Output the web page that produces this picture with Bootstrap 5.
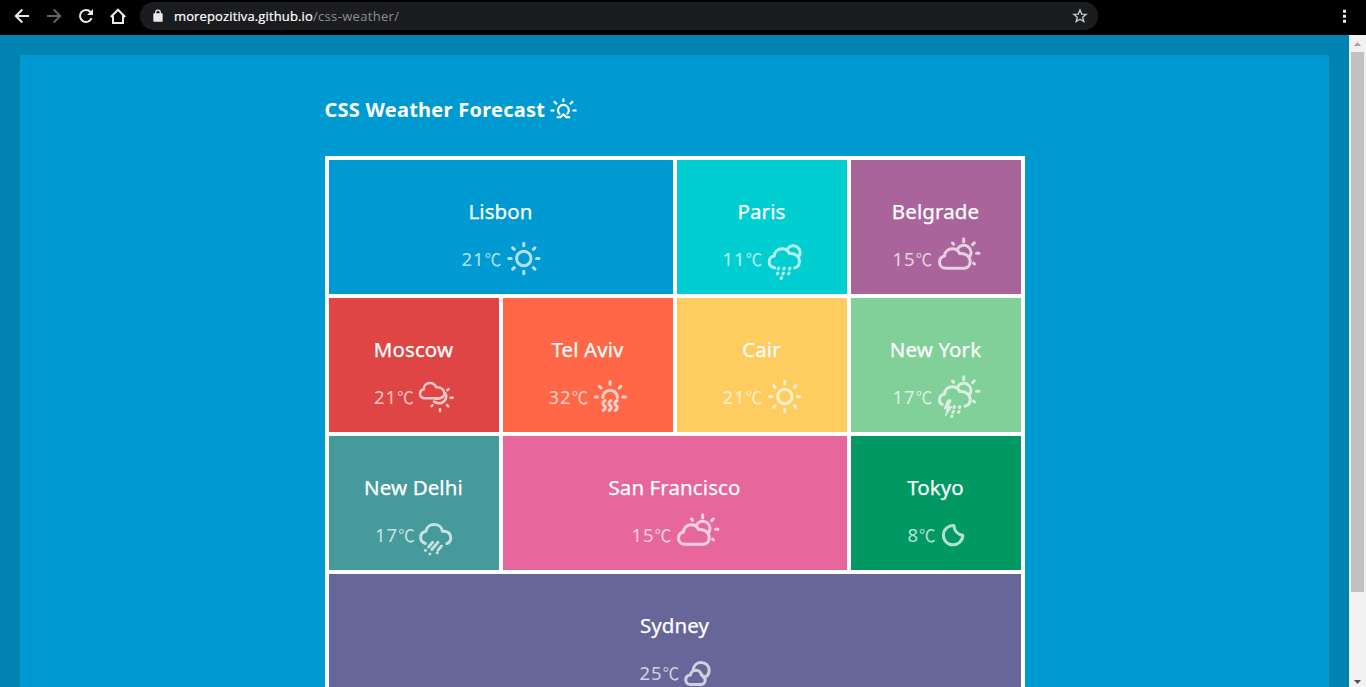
<!DOCTYPE html>
<html lang="en">
<head>
<meta charset="utf-8">
<meta name="viewport" content="width=device-width, initial-scale=1">
<title>CSS Weather Forecast</title>
<link href="https://cdn.jsdelivr.net/npm/bootstrap@5.3.0/dist/css/bootstrap.min.css" rel="stylesheet">
<style>
body{height:687px;overflow:hidden;font-family:"Noto Sans","Open Sans",sans-serif;background:#0083b0}
.toolbar{height:35px;background:#000;padding:0 14px 3px 14px}
.toolbar svg{display:block;fill:none;stroke:#e8eaed;stroke-width:2}
.toolbar .off{stroke:#5f6368}
.tools{width:126px;gap:16px}
.address{width:958px;height:28px;background:#1b1c20;padding:0 10px 0 12px;font:13px "Open Sans",sans-serif;letter-spacing:.13px}
.address .host{-webkit-text-stroke:.2px #fff}
.address .path{color:#8b8e92;letter-spacing:.33px}
.viewport{height:652px}
.page{border:20px solid #0083b0;border-bottom:0;background:#009ad2;overflow:hidden}
.forecast{width:700px;margin:0 auto}
h1{font-size:20px;line-height:28px;font-weight:700;letter-spacing:.25px;margin:41px 0 32px;gap:5px}
.tiles{display:grid;grid-template-columns:repeat(4,170px);grid-auto-rows:134px;gap:4px;border:4px solid #fff;background:#fff}
.wide{grid-column:span 2}.full{grid-column:span 4}
.tile{padding-top:36px;color:#fff}
.city{font-size:20.5px;line-height:30px;font-weight:400;letter-spacing:.1px;margin:0 0 9px;-webkit-text-stroke:.25px #fff}
.now{height:48px;gap:5px;padding-left:1px;opacity:.7}
.temp{width:39px;font-size:18.5px;line-height:48px;letter-spacing:1px;white-space:nowrap}
.temp span{font-family:"Noto Sans CJK SC",sans-serif;font-size:16.5px;letter-spacing:0}
.temp.short{width:28px}
.now svg,h1 svg{display:block;flex:none;fill:none;stroke:#fff;stroke-width:3;stroke-linecap:round;stroke-linejoin:round;overflow:visible}
.scroller{width:17px;background:#f1f1f1}
.thumb{width:13px;height:540px;background:#c1c1c1}
</style>
</head>
<body>
<nav class="toolbar d-flex align-items-center">
  <div class="tools d-flex align-items-center">
    <svg width="16" height="16" viewBox="0 0 16 16"><path d="M15 8H2M8.300 1.500 1.800 8l6.500 6.500"/></svg>
    <svg class="off" width="16" height="16" viewBox="0 0 16 16"><path d="M1 8h13M7.700 1.500 14.200 8l-6.500 6.500"/></svg>
    <svg width="16" height="16" viewBox="0 0 16 16"><path d="M13.600 10.200A6 6 0 1 1 12.500 4"/><path d="M15 1v6H9z" fill="#e8eaed" stroke="none"/></svg>
    <svg width="16" height="16" viewBox="0 0 16 16"><path d="M.8 9 8 1.700 15.200 9M3 7.500V15h10V7.500"/></svg>
  </div>
  <div class="address rounded-pill d-flex align-items-center text-white">
    <svg class="me-2" width="14" height="14" viewBox="0 0 14 14"><path d="M2 5h8v7H2z" fill="#e8eaed" stroke-width="1.300" stroke-linejoin="round"/><path d="M3.700 5V3.500a2.300 2.300 0 0 1 4.600 0V5" style="stroke-width:1.300"/></svg>
    <span class="host">morepozitiva.github.io</span><span class="path">/css-weather/</span>
    <svg class="ms-auto" width="16" height="16" viewBox="0 0 16 16"><path d="m8 2 1.700 4.100 4.400.3-3.400 2.800 1.100 4.300L8 11.200l-3.800 2.300 1.100-4.300-3.400-2.800 4.400-.3z" style="stroke-width:1.400;stroke:#c4c6c9"/></svg>
  </div>
  <svg class="ms-auto" width="16" height="16" viewBox="0 0 16 16"><path d="M7 1.800h3v3H7zM7 6.800h3v3H7zM7 11.800h3v3H7z" fill="#e8eaed" stroke="none"/></svg>
</nav>

<div class="viewport d-flex">
  <main class="page flex-grow-1">
    <div class="forecast">
      <h1 class="d-flex align-items-center text-white"><span>CSS Weather Forecast</span>
        <svg width="27" height="24" viewBox="0 0 27 24" style="stroke-width:2.100;stroke-linecap:butt"><path d="M10 16.500A5.400 5.400 0 1 1 16.800 16.500M6.700 19.300h3.600l3.100-3.100 3.100 3.100h3.600M13.400 .500v3.400M.5 12.500h4M22.500 12.500h4M3.900 3.300l3 3M22.900 3.300l-3 3"/></svg>
      </h1>
      <section class="tiles">
        <article class="tile wide text-center" style="background:#009ad2"><h2 class="city">Lisbon</h2>
          <div class="now d-flex justify-content-center"><div class="temp text-start">21<span>℃</span></div>
          <svg width="35" height="48" viewBox="0 0 35 48"><g id="sun"><circle cx="17.800" cy="23.500" r="7.200"/><path d="M17.800 8.200v2.500M17.800 36.300v2.500M2.700 23.500h2.500M30.500 23.500H33M6.700 12.800l1.600 1.500M28.900 12.800l-1.600 1.500M6.700 34.200l1.600-1.500M28.900 34.200l-1.600-1.500"/></g></svg></div></article>

        <article class="tile text-center" style="background:#00ced1"><h2 class="city">Paris</h2>
          <div class="now d-flex justify-content-center"><div class="temp text-start">11<span>℃</span></div>
          <svg width="35" height="48" viewBox="0 0 35 48"><path d="M7.500 32.800C4 32 2.200 30 2.200 27c0-3.200 2.100-5.500 5.100-6C7.300 16.800 10.700 13.700 15 13.700c3.500 0 6.200 2 7.400 4.900C28.500 18 32.400 21.500 32.400 26.600c0 3.200-1.700 5.500-4.600 6.200M20.800 13.600a6.800 6.800 0 1 1 10.500 8.600"/><path d="m11.700 33-.5 1M17.300 33l-.5 1M23 33l-.5 1M10.800 38l-.5 1M16.400 38l-.5 1M22 38l-.5 1M14.600 42.500l-.5 1"/></svg></div></article>

        <article class="tile text-center" style="background:#a9659b"><h2 class="city">Belgrade</h2>
          <div class="now d-flex justify-content-center"><div class="temp text-start">15<span>℃</span></div>
          <svg width="43" height="48" viewBox="0 0 43 48"><g id="partly"><path d="M9 33.300c-4 0-6.500-2.700-6.500-6.100 0-3.200 2.100-5.600 5.100-6.200 0-4.200 3.400-7.300 7.700-7.300 3.500 0 6.200 2 7.400 4.900 6.100-.6 10.500 2.900 10.500 8 0 3.900-2.700 6.700-6.200 6.700z"/><path id="glow" d="M20.900 13.300a7.200 7.200 0 1 1 11.200 9M26.700 3.800v3M15.500 8l1.100 1.300M35.600 9.600l1.700-1.700M39.500 18.300h2.500M36.600 28.200l.9.800"/></g></svg></div></article>

        <article class="tile text-center" style="background:#e04545"><h2 class="city">Moscow</h2>
          <div class="now d-flex justify-content-center"><div class="temp text-start">21<span>℃</span></div>
          <svg width="36" height="48" viewBox="0 0 36 48" style="stroke-width:2.500"><path d="M7 25.300c-3.200 0-5-2-5-4.500 0-2.400 1.500-4.100 3.800-4.600 0-3.600 2.700-6.200 6.200-6.200 2.800 0 5 1.500 6.200 4.200 4.800-.4 8.100 2.300 8.100 6.200 0 2.900-2 4.900-4.800 4.900zM16 28.500c2.300 2.300 6.700 2.500 9.500.2 2.500-2 3.300-5.500 2-8.500M16.500 25.500c3.300.8 6 .3 7.500-1.500M29.200 17.200l1.500-1.200M32.500 24.700h2.300M29 32l1.300 1.300M22 36v2.200M14.600 32l-1.100 1.200"/></svg></div></article>

        <article class="tile text-center" style="background:#ff6747"><h2 class="city">Tel Aviv</h2>
          <div class="now d-flex justify-content-center"><div class="temp text-start">32<span>℃</span></div>
          <svg width="35" height="48" viewBox="0 0 35 48"><path d="M9.800 24.500a7.300 7.300 0 0 1 14.600 0M17.100 8.700v2.500M1.800 24h2.700M29.800 24h2.700M6.300 13.300l1.800 1.700M27.900 13.300l-1.800 1.700"/><path d="M12 27.500c-2.700 2-2.700 3.500-.8 5s1.500 3-1 5M18 27.500c-2.700 2-2.700 3.500-.8 5s1.500 3-1 5M24 27.500c-2.700 2-2.700 3.500-.8 5s1.500 3-1 5"/></svg></div></article>

        <article class="tile text-center" style="background:#ffcc5f"><h2 class="city">Cair</h2>
          <div class="now d-flex justify-content-center"><div class="temp text-start">21<span>℃</span></div>
          <svg width="35" height="48" viewBox="0 0 35 48"><use href="#sun"/></svg></div></article>

        <article class="tile text-center" style="background:#81cf99"><h2 class="city">New York</h2>
          <div class="now d-flex justify-content-center"><div class="temp text-start">17<span>℃</span></div>
          <svg width="43" height="48" viewBox="0 0 43 48"><path d="M5.300 31.500C3.500 30.600 2.500 29 2.500 27.200c0-3.200 2.100-5.600 5.100-6.200 0-4.200 3.400-7.300 7.700-7.300 3.500 0 6.200 2 7.400 4.900 6.100-.6 10.500 2.900 10.500 8 0 3.400-2.100 6-5.100 6.600"/><use href="#glow"/><path d="M10.500 27.300 7 35.800h3.300L8.300 43l6.700-9.300h-3.500l2.600-6.400z" fill="#fff" style="stroke-width:1"/><path d="m17.500 33.500-.5 1M23 33.500l-.5 1M16.500 38.300l-.5 1M22 38.300l-.5 1M15 43l-.3.500"/></svg></div></article>

        <article class="tile text-center" style="background:#469a9b"><h2 class="city">New Delhi</h2>
          <div class="now d-flex justify-content-center"><div class="temp text-start">17<span>℃</span></div>
          <svg width="34" height="48" viewBox="0 0 34 48"><path d="M6.300 32.500C3.300 31.500 1.700 29.300 1.700 26.500c0-3.200 2.100-5.700 5.300-6.300.5-4 4-6.700 8.200-6.700s7.700 2.700 8.200 6.700c5.300-.5 8.400 2.400 8.400 6.500 0 3-1.500 5-4 5.800"/><path d="M13.500 31.300 9.500 36M19 31.300 12.800 38.500M22.500 35l-3.600 4.300M6.500 39.300l-.1.100M11 43l-.1.100M18.300 42l-.1.100" style="stroke-width:2.800"/></svg></div></article>

        <article class="tile wide text-center" style="background:#e7669b"><h2 class="city">San Francisco</h2>
          <div class="now d-flex justify-content-center"><div class="temp text-start">15<span>℃</span></div>
          <svg width="43" height="48" viewBox="0 0 43 48"><use href="#partly"/></svg></div></article>

        <article class="tile text-center" style="background:#009963"><h2 class="city">Tokyo</h2>
          <div class="now d-flex justify-content-center"><div class="temp short text-start">8<span>℃</span></div>
          <svg width="24" height="48" viewBox="0 0 24 48"><path d="M13 14.500A9.700 9.700 0 1 0 21.800 24.200C17 23.800 13 20 13 14.500z"/></svg></div></article>

        <article class="tile full text-center" style="background:#666699"><h2 class="city">Sydney</h2>
          <div class="now d-flex justify-content-center"><div class="temp text-start">25<span>℃</span></div>
          <svg width="27" height="48" viewBox="0 0 27 48"><path d="M6.500 35.600c-3 0-4.800-2-4.800-4.600s1.800-4.600 4.700-4.900c.3-3 2.700-4.900 5.500-4.900 3 0 5.200 2.200 5.500 5 2.400.4 3.800 2.200 3.800 4.600 0 2.700-1.800 4.800-4.500 4.800zM9.200 20.500c.5-4 3.800-7 8-7 4.600 0 8 3.400 8 7.700 0 3.800-2.200 6.400-5.600 7.300"/></svg></div></article>
      </section>
    </div>
  </main>
  <aside class="scroller d-flex flex-column align-items-center">
    <svg width="17" height="17" viewBox="0 0 17 17"><path d="m5 11 3.500-4 3.500 4z" fill="#a3a3a3"/></svg>
    <div class="thumb"></div>
    <svg class="mt-auto" width="17" height="17" viewBox="0 0 17 17"><path d="m5 10 3.500 4 3.500-4z" fill="#505050"/></svg>
  </aside>
</div>
<script src="https://cdn.jsdelivr.net/npm/bootstrap@5.3.0/dist/js/bootstrap.bundle.min.js"></script>
</body>
</html>
